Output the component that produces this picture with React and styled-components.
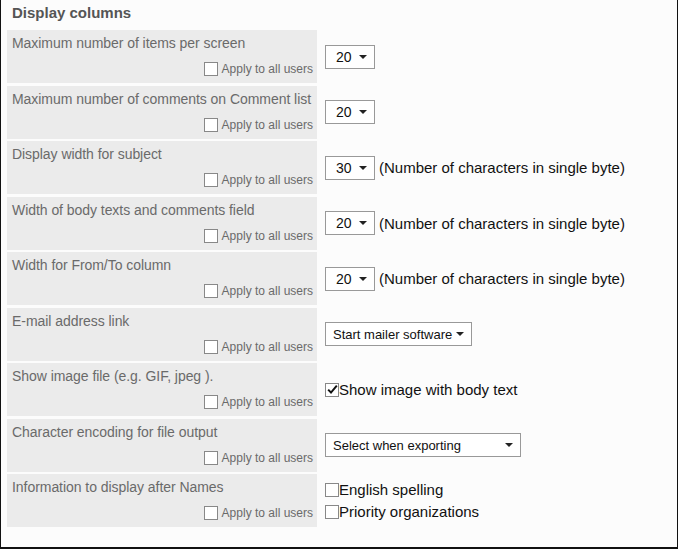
import React from "react";
import styled, { createGlobalStyle } from "styled-components";

const GlobalStyle = createGlobalStyle`
  html, body {
    margin: 0;
    padding: 0;
    background: #fcfcfc;
  }
  body {
    font-family: "Liberation Sans", Arial, sans-serif;
  }
`;

// 설정 항목 목록
const rows = [
  { label: "Maximum number of items per screen", type: "select", value: "20", width: 50 },
  { label: "Maximum number of comments on Comment list", type: "select", value: "20", width: 50 },
  { label: "Display width for subject", type: "select", value: "30", width: 50, note: "(Number of characters in single byte)" },
  { label: "Width of body texts and comments field", type: "select", value: "20", width: 50, note: "(Number of characters in single byte)" },
  { label: "Width for From/To column", type: "select", value: "20", width: 50, note: "(Number of characters in single byte)" },
  { label: "E-mail address link", type: "select", value: "Start mailer software", width: 147 },
  { label: "Show image file (e.g. GIF, jpeg ).", type: "checks", items: [{ text: "Show image with body text", checked: true }] },
  { label: "Character encoding for file output", type: "select", value: "Select when exporting", width: 196 },
  {
    label: "Information to display after Names",
    type: "checks",
    items: [
      { text: "English spelling", checked: false },
      { text: "Priority organizations", checked: false },
    ],
  },
];

const CheckBox = ({ checked }) => (
  <Box>
    {checked && (
      <svg width="13" height="13" viewBox="0 0 13 13">
        <path d="M2.2 6.6 L5 9.6 L10.8 2.6" fill="none" stroke="#111" strokeWidth="2" />
      </svg>
    )}
  </Box>
);

const App = () => {
  return (
    <>
      <GlobalStyle />
      <Page>
        <Title>Display columns</Title>
        <Table>
          {rows.map((row, i) => (
            <React.Fragment key={i}>
              <LabelCell>
                <LabelText>{row.label}</LabelText>
                <ApplyRow>
                  <CheckBox />
                  <span>Apply to all users</span>
                </ApplyRow>
              </LabelCell>
              <ValueCell $stack={row.type === "checks"}>
                {row.type === "select" ? (
                  <>
                    <SelectBox $w={row.width}>
                      <span>{row.value}</span>
                      <Arrow />
                    </SelectBox>
                    {row.note && <Note>{row.note}</Note>}
                  </>
                ) : (
                  row.items.map((item) => (
                    <CheckLine key={item.text}>
                      <CheckBox checked={item.checked} />
                      <span>{item.text}</span>
                    </CheckLine>
                  ))
                )}
              </ValueCell>
            </React.Fragment>
          ))}
        </Table>
      </Page>
    </>
  );
};

const Page = styled.div`
  box-sizing: border-box;
  width: 678px;
  height: 549px;
  border-left: 1px solid #111;
  border-right: 1px solid #111;
  border-bottom: 2px solid #111;
  padding: 4px 0 0 6px;
`;

const Title = styled.div`
  font-size: 15px;
  font-weight: bold;
  color: #555;
  padding-left: 5px;
  height: 26px;
  line-height: 18px;
`;

const Table = styled.div`
  display: grid;
  grid-template-columns: 310px 1fr;
  column-gap: 8px;
  row-gap: 2.5px;
`;

const LabelCell = styled.div`
  box-sizing: border-box;
  height: 53px;
  background: #ebebeb;
  padding: 5px 4px 0 5px;
  display: flex;
  flex-direction: column;
  justify-content: space-between;
  color: #6a6a6a;
`;

const LabelText = styled.div`
  font-size: 14px;
  line-height: 17px;
  white-space: nowrap;
  letter-spacing: -0.05px;
`;

const ApplyRow = styled.label`
  display: flex;
  align-items: center;
  justify-content: flex-end;
  gap: 4px;
  font-size: 12px;
  height: 20px;
  padding-bottom: 4px;
`;

const Box = styled.span`
  box-sizing: border-box;
  display: inline-block;
  width: 14px;
  height: 14px;
  border: 1px solid #888;
  background: #fff;
  flex-shrink: 0;
  svg {
    display: block;
    margin: -0.5px 0 0 -0.5px;
  }
`;

const ValueCell = styled.div`
  display: flex;
  flex-direction: ${(p) => (p.$stack ? "column" : "row")};
  justify-content: ${(p) => (p.$stack ? "center" : "flex-start")};
  align-items: ${(p) => (p.$stack ? "flex-start" : "center")};
  gap: ${(p) => (p.$stack ? "7px" : "4px")};
  color: #111;
`;

const SelectBox = styled.div`
  box-sizing: border-box;
  width: ${(p) => p.$w}px;
  height: 24px;
  border: 1px solid #999;
  background: #fff;
  display: flex;
  align-items: center;
  justify-content: space-between;
  padding: 0 7px 0 7px;
  font-size: ${(p) => (p.$w < 60 ? "14px" : "13px")};
  color: #111;
  span {
    padding-left: ${(p) => (p.$w < 60 ? "3px" : "0")};
  }
`;

const Arrow = styled.i`
  width: 0;
  height: 0;
  border-left: 4px solid transparent;
  border-right: 4px solid transparent;
  border-top: 4px solid #222;
`;

const Note = styled.span`
  font-size: 15px;
  color: #111;
`;

const CheckLine = styled.label`
  display: flex;
  align-items: center;
  font-size: 15px;
  line-height: 15px;
  color: #111;
`;

export default App;
